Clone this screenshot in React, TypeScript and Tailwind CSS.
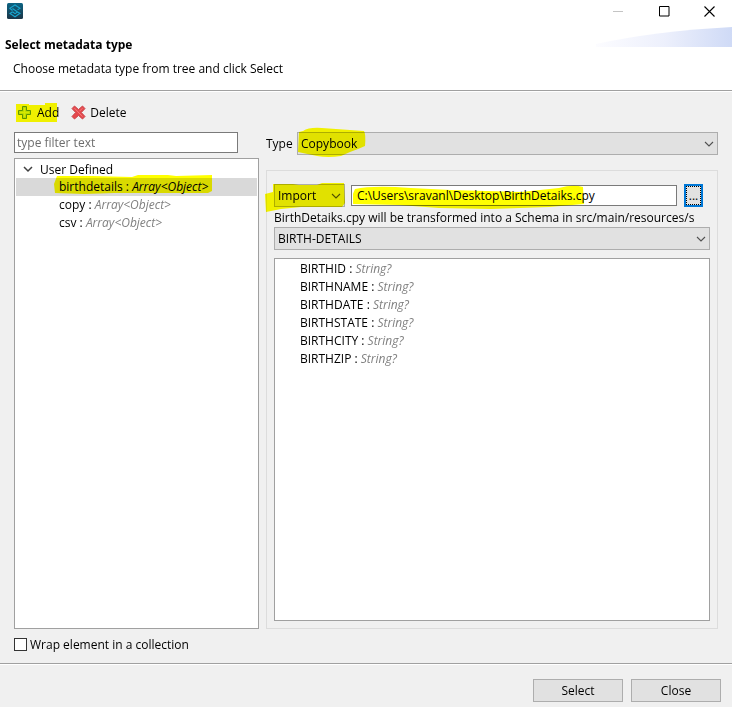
import React, { useState } from "react";

const fields = [
  "BIRTHID",
  "BIRTHNAME",
  "BIRTHDATE",
  "BIRTHSTATE",
  "BIRTHCITY",
  "BIRTHZIP",
];

const types = ["birthdetails", "copy", "csv"];

// yellow marker stroke lying over a control
const Marker = ({
  className,
  viewBox,
  d,
}: {
  className: string;
  viewBox: string;
  d: string;
}) => (
  <svg
    className={`pointer-events-none absolute mix-blend-multiply ${className}`}
    viewBox={viewBox}
    fill="#ffff00"
    aria-hidden="true"
  >
    <path d={d} />
  </svg>
);

const Combo = ({
  id,
  label,
  options,
  className = "",
}: {
  id: string;
  label: string;
  options: string[];
  className?: string;
}) => (
  <div className={`relative ${className}`}>
    <select
      id={id}
      aria-label={label}
      className="block h-[23px] w-full appearance-none border border-[#adadad] bg-[#e1e1e1] pl-[3px] pr-5 text-black outline-none"
    >
      {options.map((option) => (
        <option key={option}>{option}</option>
      ))}
    </select>
    <svg
      className="pointer-events-none absolute right-1 top-2 h-2 w-[10px]"
      viewBox="0 0 10 8"
      fill="none"
      stroke="#505050"
      strokeWidth="1.1"
    >
      <path d="M1 2l4 4 4-4" />
    </svg>
  </div>
);

const Header = () => (
  <header className="border-b border-[#a0a0a0] bg-white">
    <div className="relative flex h-[36px] items-start justify-between">
      <svg className="ml-[7px] mt-[3px] h-4 w-4" viewBox="0 0 16 16">
        <defs>
          <linearGradient id="logo" x1="0" y1="0" x2="0" y2="1">
            <stop offset="0" stopColor="#0c6484" />
            <stop offset="1" stopColor="#1b3547" />
          </linearGradient>
        </defs>
        <rect width="16" height="16" rx="1.5" fill="url(#logo)" />
        <g fill="none" stroke="#18a5cf" strokeWidth="1.1">
          <path d="M5.500 7.500L2.800 5.200 8 2l5 3.200-2.500 1.700" />
          <path d="M5.500 5.500l5 3.500 2.500 1.300L8 13.800l-5-3.300 2.500-1.700" />
          <path d="M5.500 8.800L8 10.600l2.500-1.600" />
        </g>
      </svg>
      <svg
        className="pointer-events-none absolute right-0 top-[27px] h-5 w-[136px]"
        viewBox="0 0 136 20"
      >
        <defs>
          <linearGradient id="swoosh">
            <stop offset="0" stopColor="#fcfcff" />
            <stop offset="0.5" stopColor="#edf0fc" />
            <stop offset="1" stopColor="#cfdaf6" />
          </linearGradient>
        </defs>
        <path d="M0 17Q60 4 136 0v20H0z" fill="url(#swoosh)" />
      </svg>
      <div className="flex">
        <button aria-label="Minimize" className="flex h-[23px] w-[45px] items-center justify-center">
          <svg className="h-[11px] w-[11px]" viewBox="0 0 11 11" stroke="#c4c4c4">
            <path d="M0 5.500h10" />
          </svg>
        </button>
        <button aria-label="Maximize" className="flex h-[23px] w-[46px] items-center justify-center">
          <svg className="h-[11px] w-[11px]" viewBox="0 0 11 11" fill="none" stroke="#000">
            <path d="M.5.5h9.500v9.500H.5z" />
          </svg>
        </button>
        <button aria-label="Close window" className="flex h-[23px] w-[45px] items-center justify-center">
          <svg className="h-[11px] w-[11px]" viewBox="0 0 11 11" stroke="#000" strokeWidth="1.1">
            <path d="M.5.5l10 10M10.500.5l-10 10" />
          </svg>
        </button>
      </div>
    </div>
    <h1 className="pl-[5px] font-bold leading-[18px]">Select metadata type</h1>
    <p className="pb-[12px] pl-[13px] pt-[6px] leading-[18px]">
      Choose metadata type from tree and click Select
    </p>
  </header>
);

const TypePanel = () => {
  const [selected, setSelected] = useState("birthdetails");

  return (
    <section className="flex flex-col">
      <div className="flex h-[35px] items-center gap-3 pt-[6px]">
        <button className="relative flex items-center gap-[5px] pl-[3px]">
          <svg className="h-[15px] w-[15px]" viewBox="0 0 15 15">
            <path
              d="M5.500 1.500h4v4h4v4h-4v4h-4v-4h-4v-4h4z"
              fill="#b5d77a"
              stroke="#5d9426"
            />
            <path d="M7.500 3v9M3 7.500h9" stroke="#d5e8ad" strokeWidth="1.500" />
          </svg>
          Add
          <Marker
            className="left-[2px] top-[-1px] h-[19px] w-[41px]"
            viewBox="0 0 41 19"
            d="M0 1h13v1h16V0h12v19H0z"
          />
        </button>
        <button className="flex items-center gap-1">
          <svg className="h-[15px] w-[15px]" viewBox="0 0 15 15">
            <path
              d="M3.500 1L7.500 4.600 11.500 1 14 3.600 10.300 7.500 14 11.500 11.500 14 7.500 10.400 3.500 14 1 11.500 4.700 7.500 1 3.600z"
              fill="#e5484d"
              stroke="#c9464a"
              strokeLinejoin="round"
            />
            <path d="M3.500 3.200l8 8.500M11.500 3.200l-3 3" stroke="#f37b7b" />
          </svg>
          Delete
        </button>
      </div>
      <input
        type="text"
        aria-label="Filter types"
        placeholder="type filter text"
        className="mr-[21px] mt-[5px] h-[21px] border border-[#7a7a7a] bg-white px-[2px] outline-none placeholder:text-[#6d6d6d]"
      />
      <div className="mt-[5px] flex-1 border border-[#a0a0a0] bg-white p-px" role="tree">
        <div className="flex h-[18px] items-center gap-[7px] pl-[7px]" role="treeitem">
          <svg className="h-[10px] w-[10px]" viewBox="0 0 10 10" fill="none" stroke="#404040" strokeWidth="1.500">
            <path d="M1 3l4 4 4-4" />
          </svg>
          User Defined
        </div>
        {types.map((name) => (
          <div
            key={name}
            role="treeitem"
            aria-selected={selected === name}
            onClick={() => setSelected(name)}
            className={`relative h-[18px] pl-[43px] leading-[18px] ${
              selected === name ? "bg-[#d9d9d9]" : ""
            }`}
          >
            {name} :{" "}
            <i className={selected === name ? "" : "text-[#808080]"}>
              Array&lt;Object&gt;
            </i>
            {name === "birthdetails" && (
              <Marker
                className="left-[38px] top-[-3px] h-[20px] w-[158px]"
                viewBox="0 0 158 20"
                d="M3 1l35 0 40 1 6-2h30l8 1 36-1v16l-4 2H60l-30 1-29-1-1-9z"
              />
            )}
          </div>
        ))}
      </div>
    </section>
  );
};

const SchemaPanel = () => (
  <section className="flex min-w-0 flex-col pt-[40px]">
    <div className="relative flex items-center">
      <label htmlFor="type" className="w-[31px]">
        Type
      </label>
      <Combo id="type" label="Type" options={["Copybook", "JSON", "XML"]} className="flex-1" />
      <Marker
        className="left-[31px] top-[-5px] h-[31px] w-[69px]"
        viewBox="0 0 69 31"
        d="M6 4Q12 0 25 1L67 4q2 3 1 15l-7 3-8 3-9 4q-13 2-24 0L1 25l1-20z"
      />
    </div>
    <div className="mt-[15px] flex flex-1 flex-col border border-[#dcdcdc] px-[7px] pb-[7px] pt-[13px]">
      <div className="relative flex items-center">
        <Combo id="source" label="Source" options={["Import", "Example"]} className="mr-[6px] w-[71px]" />
        <input
          type="text"
          aria-label="Copybook file"
          defaultValue="C:\Users\sravanl\Desktop\BirthDetaiks.cpy"
          className="mr-[7px] h-[21px] min-w-0 flex-1 border border-[#7a7a7a] bg-white px-[5px] outline-none"
        />
        <button
          aria-label="Browse"
          className="mr-[7px] flex h-[23px] w-[19px] border-2 border-[#0078d7] bg-[#e1e1e1]"
        >
          <span className="h-full w-full border border-dotted border-black leading-[17px]">
            ...
          </span>
        </button>
        <Marker
          className="left-[-9px] top-[-1px] h-[29px] w-[80px]"
          viewBox="0 0 80 29"
          d="M8 1h20l6 1h18l5-2h22l1 20-3 4H36l-20 2-15 3-1-18 8-2z"
        />
        <Marker
          className="left-[79px] top-[1px] h-[25px] w-[233px]"
          viewBox="0 0 233 25"
          d="M2 4Q20 0 58 3l40 2 70 2 38-4q14-4 24-1l1 17-35 3-58 2-52-1-40-3-46-1-1-8z"
        />
      </div>
      <p className="mt-px h-[19px] whitespace-nowrap leading-[19px]">
        BirthDetaiks.cpy will be transformed into a Schema in src/main/resources/s
      </p>
      <Combo id="record" label="Record" options={["BIRTH-DETAILS"]} />
      <ul className="mt-2 flex-1 border border-[#a0a0a0] bg-white py-px pl-[25px]">
        {fields.map((field) => (
          <li key={field} className="h-[18px] leading-[18px]">
            {field} : <i className="text-[#808080]">String?</i>
          </li>
        ))}
      </ul>
    </div>
  </section>
);

export default function App() {
  return (
    <div className="flex min-h-screen flex-col bg-[#f0f0f0] font-['Open_Sans','Noto_Sans',sans-serif] text-[12px] leading-[17px] text-black">
      <Header />
      <main className="grid flex-1 grid-cols-[245fr_452fr] gap-[7px] border-t border-white px-[14px]">
        <TypePanel />
        <SchemaPanel />
      </main>
      <label className="flex items-center gap-[3px] px-[14px] pb-[10px] pt-[7px]">
        <input
          type="checkbox"
          className="h-[13px] w-[13px] appearance-none border border-[#333333] bg-white checked:bg-[#0078d7]"
        />
        Wrap element in a collection
      </label>
      <footer className="border-t border-[#a0a0a0]">
        <div className="flex justify-end gap-2 border-t border-white pb-[5px] pr-[11px] pt-[14px]">
          <button className="h-[23px] w-[90px] border border-[#adadad] bg-[#e1e1e1]">Select</button>
          <button className="h-[23px] w-[90px] border border-[#adadad] bg-[#e1e1e1]">Close</button>
        </div>
      </footer>
    </div>
  );
}
